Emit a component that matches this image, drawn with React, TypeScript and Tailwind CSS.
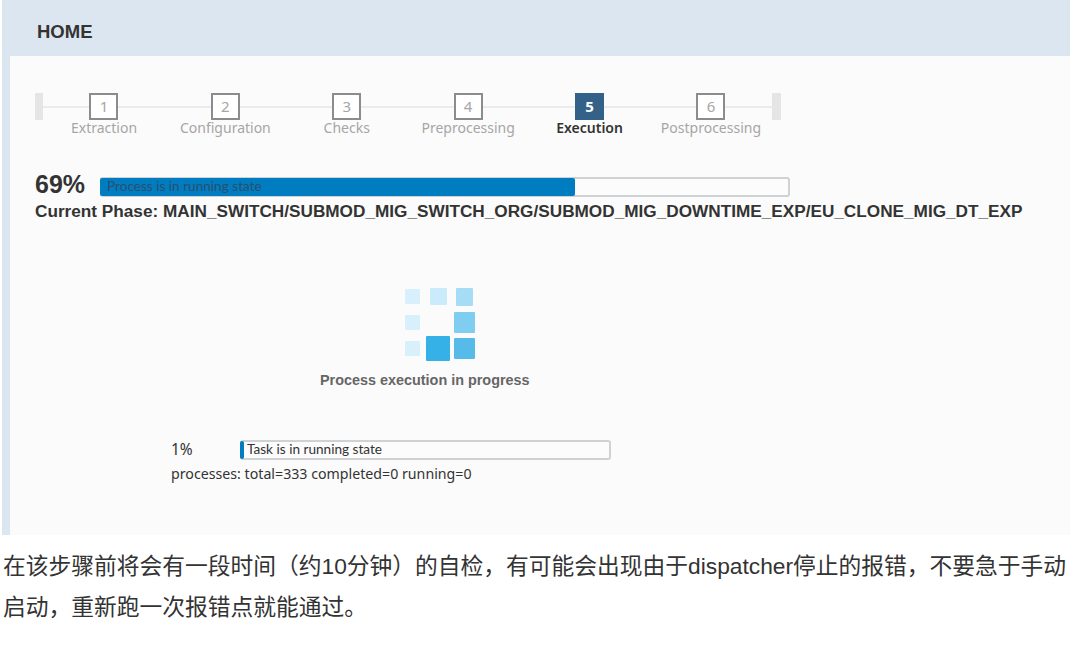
const steps = ["Extraction", "Configuration", "Checks", "Preprocessing", "Execution", "Postprocessing"];

function Step({ index, label }: { index: number; label: string }) {
  const active = index === 5;
  return (
    <div className="relative flex w-[121.4px] flex-col items-center">
      <div className="absolute left-0 right-0 top-[13px] h-[2px] bg-[#ebebeb]" />
      <div
        className={
          active
            ? "relative flex h-[27px] w-[29px] items-center justify-center bg-[#346187] text-[15px] font-bold leading-none text-white"
            : "relative flex h-[27px] w-[29px] items-center justify-center border-2 border-[#8c8c8c] bg-white text-[15px] leading-none text-[#a6a6a6]"
        }
      >
        {index}
      </div>
      <span
        className={
          active
            ? "whitespace-nowrap text-[14px] font-semibold leading-[16px] text-[#333333]"
            : "whitespace-nowrap text-[14px] leading-[16px] text-[#a6a6a6]"
        }
      >
        {label}
      </span>
    </div>
  );
}

function Progress({ width, fillWidth, label, textColor }: { width: string; fillWidth: string; label: string; textColor: string }) {
  return (
    <div className={`relative h-[20px] rounded-[3px] border-2 border-[#cfd2d4] bg-[#fcfcfc] ${width}`}>
      <div className={`absolute -bottom-[1px] -left-[2px] -top-[1px] rounded-[2px] bg-[#007cc0] ${fillWidth}`} />
      <span className={`relative block whitespace-nowrap pl-[5px] font-['Lato',sans-serif] text-[13.6px] leading-[15px] ${textColor}`}>{label}</span>
    </div>
  );
}

function Spinner() {
  return (
    <svg width="70" height="73" viewBox="0 0 70 73" className="ml-[395px] mt-[67px] block">
      <rect x="0" y="1" width="15" height="15" rx="1" fill="#d8f0fb" />
      <rect x="25" y="0" width="17" height="17" rx="1" fill="#c9ebfb" />
      <rect x="51" y="0" width="17" height="18" rx="1" fill="#a5dcf6" />
      <rect x="0" y="27" width="15" height="15" rx="1" fill="#d8f0fb" />
      <rect x="49" y="24" width="21" height="21" rx="1" fill="#7fcdf0" />
      <rect x="0" y="53" width="15" height="15" rx="1" fill="#d8f0fb" />
      <rect x="21" y="48" width="24" height="25" rx="1" fill="#36b1e8" />
      <rect x="49" y="50" width="21" height="21" rx="1" fill="#57bbea" />
    </svg>
  );
}

export default function App() {
  return (
    <div className="h-[651px] w-[1080px] overflow-hidden bg-white font-['Noto_Sans','Noto_Sans_CJK_SC',sans-serif]">
      <div className="ml-[2px] w-[1068px] border-l-[8px] border-[#dce6f0] bg-[#fbfbfb]">
        <div className="-ml-[8px] flex h-[56px] items-center bg-[#dce6f0] pl-[35px] pt-[8px] font-['Liberation_Sans',sans-serif] text-[18.5px] font-bold text-[#333333]">
          HOME
        </div>
        <div className="h-[479px] pt-[37px] text-[#333333]">
          <div className="ml-[25px] flex w-max items-start">
            <div className="h-[27px] w-[8.3px] bg-[#e5e5e5]" />
            {steps.map((label, i) => (
              <Step key={label} index={i + 1} label={label} />
            ))}
            <div className="h-[27px] w-[9.5px] bg-[#e5e5e5]" />
          </div>

          <div className="ml-[25px] mt-[36px] flex h-[28px] items-center">
            <span className="mb-[4px] w-[65px] font-['Liberation_Sans',sans-serif] text-[25px] font-bold leading-none text-[#333333]">69%</span>
            <div className="mt-[2px]">
              <Progress width="w-[690px]" fillWidth="w-[475px]" label="Process is in running state" textColor="text-[#2c4f6e]" />
            </div>
          </div>
          <div className="ml-[25px] mt-[1px] whitespace-nowrap font-['Liberation_Sans',sans-serif] text-[17.2px] font-bold leading-[20px] text-[#333333]">
            Current Phase: MAIN_SWITCH/SUBMOD_MIG_SWITCH_ORG/SUBMOD_MIG_DOWNTIME_EXP/EU_CLONE_MIG_DT_EXP
          </div>

          <Spinner />
          <div className="ml-[310px] mt-[9px] font-['Liberation_Sans',sans-serif] text-[14.4px] font-bold leading-[20px] text-[#666666]">
            Process execution in progress
          </div>

          <div className="ml-[161px] mt-[50px] flex h-[20px] items-center">
            <span className="w-[69px] text-[15.5px] leading-none text-[#333333]">1%</span>
            <Progress width="w-[371px]" fillWidth="w-[4px]" label="Task is in running state" textColor="text-[#333333]" />
          </div>
          <div className="ml-[161px] mt-[4px] text-[14.2px] leading-[20px] text-[#333333]">
            processes: total=333 completed=0 running=0
          </div>
        </div>
      </div>
      <p className="ml-[3px] mt-[11px] w-[1077px] font-['Liberation_Sans','Noto_Sans_CJK_SC',sans-serif] text-[22.75px] leading-[41px] text-[#333333]">
        在该步骤前将会有一段时间（约10分钟）的自检，有可能会出现由于dispatcher停止的报错，不要急于手动
        <br />
        启动，重新跑一次报错点就能通过。
      </p>
    </div>
  );
}
